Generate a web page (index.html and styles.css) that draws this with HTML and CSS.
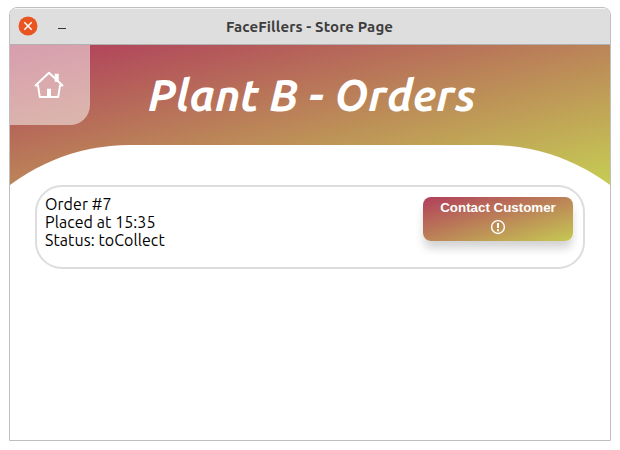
FILE: index.html
```html
<!DOCTYPE html>
<html lang="en">
<head>
<meta charset="utf-8">
<title>FaceFillers - Store Page</title>
<link rel="stylesheet" href="styles.css">
</head>
<body>
<div class="window">
  <div class="titlebar">
    <svg class="close" viewBox="0 0 20 20"><circle cx="10" cy="10" r="9.5" fill="#e95420"/><path d="M6.3 6.3l7.4 7.4M13.7 6.3l-7.4 7.4" stroke="#fff" stroke-width="1.5"/></svg>
    <span class="minimize"></span>
    <div class="caption">FaceFillers - Store Page</div>
  </div>
  <main class="page">
    <header class="hero">
      <h1>Plant B - Orders</h1>
      <a class="home">
        <svg viewBox="0 0 30 28" fill="none" stroke="#fff"><path d="M1.500 14.500L15 1.800l13.500 12.700h-2.500L24.200 26H5.800L4 14.500z" stroke-width="1.900" stroke-linejoin="round"/><path d="M15 26.500V17.800" stroke-width="4"/><path d="M22.700 2.800v8" stroke-width="4"/></svg>
      </a>
    </header>
    <section class="sheet">
      <article class="order">
        <div class="details">
          <p>Order #7</p>
          <p>Placed at 15:35</p>
          <p>Status: toCollect</p>
        </div>
        <button class="contact">Contact Customer
          <svg viewBox="0 0 16 16"><circle cx="8" cy="8" r="6.400" fill="none" stroke="#fff" stroke-width="1.450"/><path d="M8 4v5M8 10.200v2" stroke="#fff" stroke-width="2"/></svg>
        </button>
      </article>
    </section>
  </main>
</div>
</body>
</html>
```
FILE: styles.css
```css
* { box-sizing: border-box; }
body { margin: 0; background: #fff; padding: 7px 9px; font-family: Ubuntu, "Noto Sans", sans-serif; }
.window { width: 602px; height: 434px; border: 1px solid #bfbfbf; border-radius: 8px 8px 0 0; overflow: hidden; background: #fff; }
.titlebar { height: 37px; display: flex; align-items: center; padding-left: 8px; background: #dedede; border-top: 1px solid #f5f5f5; border-bottom: 1px solid #b0b0b0; }
.close { width: 20px; height: 20px; margin-top: -2px; }
.minimize { width: 8px; height: 1px; margin: 4px 0 0 20px; background: #333; }
.caption { flex: 1; margin-left: -57px; text-align: center; font-size: 15px; font-weight: 700; color: #3d3d3d; white-space: nowrap; letter-spacing: .12px; }
.page { height: 395px; overflow: hidden; }
.hero { position: relative; height: 140px; background: linear-gradient(to bottom right, #b03c5c, #c6cd54); }
.hero h1 { margin: 0; height: 100px; line-height: 100px; padding-left: 4px; text-align: center; color: #fff; font-size: 44.200px; font-style: italic; font-weight: 700; white-space: nowrap; }
.home { position: absolute; left: 0; top: 0; width: 80px; height: 80px; display: flex; align-items: center; justify-content: center; background: rgba(255,255,255,.5); border-radius: 0 0 20px 0; }
.home svg { width: 30px; height: 28px; margin: -1px 0 0 -2px; }
.sheet { position: relative; height: 440px; margin: -40px -80px 0; padding: 40px 105px 0; background: #fff; border-radius: 200px 200px 0 0; }
.order { display: flex; justify-content: space-between; height: 84px; padding: 10px 10px 10px 8px; border: 2px solid #ddd; border-radius: 27px; }
.details { margin-top: -2px; font-size: 16px; line-height: 18px; color: #000; letter-spacing: .07px; }
.details p { margin: 0; height: 18px; white-space: nowrap; }
.contact { width: 150px; height: 44px; padding: 3px 0 0; display: flex; flex-direction: column; align-items: center; justify-content: flex-start; gap: 4px; border: 0; border-radius: 8px; background: linear-gradient(to bottom right, #b23e5b, #c5c953); box-shadow: 0 8px 10px -1px rgba(0,0,0,.18); color: #fff; font: bold 13.333px/15px "Liberation Sans", sans-serif; }
.contact svg { width: 16px; height: 16px; }
```
